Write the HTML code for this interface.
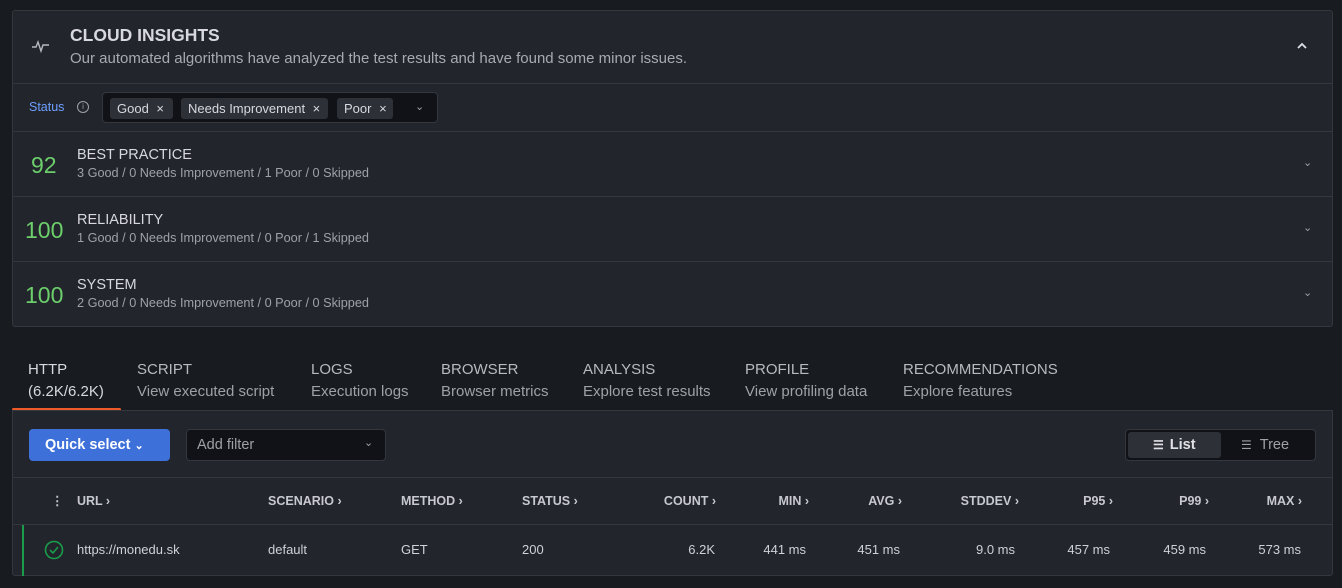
<!DOCTYPE html>
<html><head><style>
*{box-sizing:border-box;margin:0;padding:0}
body{width:1342px;height:588px;background:#181b1f;font-family:"Liberation Sans",sans-serif;color:#ccccdc;position:relative;overflow:hidden}
.a{position:absolute;white-space:nowrap}
.panel{position:absolute;left:12px;width:1321px;background:#22252b;border:1px solid #34373d;border-radius:3px}
.hl{position:absolute;left:0;right:0;height:1px;background:#34373d}
.chip{position:absolute;top:5px;height:21px;background:#2d3036;border-radius:3px;font-size:13px;line-height:21px;padding-left:7px;color:#d8d9e0}
.score{font-size:23px;color:#6ccf6c}
.ttl{font-size:14.5px;color:#d8d9e0}
.sub{font-size:12.7px;color:#9fa1a8}
.tab1{font-size:15px;color:#b8bac2}
.tab2{font-size:15px;color:#9fa1a8}
.th{font-size:12.5px;font-weight:bold;color:#c8c9d0}
.td{font-size:13px;color:#d0d1d8}
.chev{font-size:11px;color:#9fa1a8}
</style></head><body>
<div class="panel" style="top:10px;height:317px">
 <svg class="a" style="left:18px;top:26px" width="20" height="18" viewBox="0 0 20 18"><path d="M1 10h4l2-5 3 9 2-6h6" fill="none" stroke="#b8bac2" stroke-width="1.4"/></svg>
 <div class="a" style="left:57px;top:14px;font-size:17.5px;font-weight:bold;color:#d8d9e0">CLOUD INSIGHTS</div>
 <div class="a" style="left:57px;top:39px;font-size:15px;color:#a8aab2">Our automated algorithms have analyzed the test results and have found some minor issues.</div>
 <svg class="a" style="left:1283px;top:30px" width="12" height="10"><path d="M2 7l4-4 4 4" fill="none" stroke="#e0e0e6" stroke-width="1.8"/></svg>
 <div class="hl" style="top:72px"></div>
 <div class="a" style="left:16px;top:89px;font-size:12.5px;color:#6e9fff">Status</div>
 <div class="a" style="left:64px;top:90px;width:12px;height:12px;border:1px solid #9fa1a8;border-radius:50%;font-size:8px;text-align:center;line-height:10px;color:#9fa1a8">i</div>
 <div class="a" style="left:89px;top:81px;width:336px;height:31px;background:#111217;border:1px solid #34373d;border-radius:4px">
  <div class="chip" style="left:7px;width:63px">Good <span style="margin-left:4px">×</span></div>
  <div class="chip" style="left:78px;width:147px">Needs Improvement <span style="margin-left:4px">×</span></div>
  <div class="chip" style="left:234px;width:56px">Poor <span style="margin-left:4px">×</span></div>
  <div class="a chev" style="left:312px;top:7px">⌄</div>
 </div>
 <div class="hl" style="top:120px"></div>
 <div class="a score" style="left:18px;top:141px">92</div>
 <div class="a ttl" style="left:64px;top:136px">BEST PRACTICE</div>
 <div class="a sub" style="left:64px;top:155px">3 Good / 0 Needs Improvement / 1 Poor / 0 Skipped</div>
 <div class="a chev" style="left:1290px;top:145px">⌄</div>
 <div class="hl" style="top:185px"></div>
 <div class="a score" style="left:12px;top:206px">100</div>
 <div class="a ttl" style="left:64px;top:201px">RELIABILITY</div>
 <div class="a sub" style="left:64px;top:220px">1 Good / 0 Needs Improvement / 0 Poor / 1 Skipped</div>
 <div class="a chev" style="left:1290px;top:210px">⌄</div>
 <div class="hl" style="top:250px"></div>
 <div class="a score" style="left:12px;top:271px">100</div>
 <div class="a ttl" style="left:64px;top:266px">SYSTEM</div>
 <div class="a sub" style="left:64px;top:285px">2 Good / 0 Needs Improvement / 0 Poor / 0 Skipped</div>
 <div class="a chev" style="left:1290px;top:275px">⌄</div>
</div>

<div class="a tab1" style="left:28px;top:361px;color:#d8d9e0">HTTP</div><div class="a tab2" style="left:28px;top:383px;color:#d8d9e0">(6.2K/6.2K)</div>
<div class="a tab1" style="left:137px;top:361px">SCRIPT</div><div class="a tab2" style="left:137px;top:383px">View executed script</div>
<div class="a tab1" style="left:311px;top:361px">LOGS</div><div class="a tab2" style="left:311px;top:383px">Execution logs</div>
<div class="a tab1" style="left:441px;top:361px">BROWSER</div><div class="a tab2" style="left:441px;top:383px">Browser metrics</div>
<div class="a tab1" style="left:583px;top:361px">ANALYSIS</div><div class="a tab2" style="left:583px;top:383px">Explore test results</div>
<div class="a tab1" style="left:745px;top:361px">PROFILE</div><div class="a tab2" style="left:745px;top:383px">View profiling data</div>
<div class="a tab1" style="left:903px;top:361px">RECOMMENDATIONS</div><div class="a tab2" style="left:903px;top:383px">Explore features</div>
<div class="a" style="left:12px;top:408px;width:109px;height:3px;background:#f05a28;border-radius:2px"></div>

<div class="panel" style="top:410px;height:166px;border-radius:0 0 3px 3px">
 <div class="a" style="left:16px;top:18px;width:141px;height:32px;background:#3d71d9;border-radius:4px;color:#fff;font-size:14.5px;font-weight:bold;line-height:32px;padding-left:16px">Quick select <span style="font-size:11px">⌄</span></div>
 <div class="a" style="left:173px;top:18px;width:200px;height:32px;background:#111217;border:1px solid #34373d;border-radius:4px;color:#9fa1a8;font-size:14.5px;line-height:30px;padding-left:10px">Add filter<span class="a chev" style="left:177px;top:-2px">⌄</span></div>
 <div class="a" style="left:1112px;top:18px;width:191px;height:32px;background:#111217;border:1px solid #34373d;border-radius:4px">
  <div class="a" style="left:2px;top:2px;width:93px;height:26px;background:#2d3036;border-radius:3px;color:#e0e0e6;font-size:14.5px;font-weight:bold;line-height:26px;padding-left:25px"><span style="font-size:12px;margin-right:6px">☰</span>List</div>
  <div class="a" style="left:115px;top:2px;height:26px;color:#9fa1a8;font-size:14.5px;line-height:26px"><span style="font-size:12px;margin-right:8px">☰</span>Tree</div>
 </div>
 <div class="hl" style="top:66px"></div>
 <div class="a th" style="left:38px;top:82px">⋮</div>
 <div class="a th" style="left:64px;top:83px">URL ›</div>
 <div class="a th" style="left:255px;top:83px">SCENARIO ›</div>
 <div class="a th" style="left:388px;top:83px">METHOD ›</div>
 <div class="a th" style="left:509px;top:83px">STATUS ›</div>
 <div class="a th" style="right:616px;top:83px">COUNT ›</div>
 <div class="a th" style="right:523px;top:83px">MIN ›</div>
 <div class="a th" style="right:430px;top:83px">AVG ›</div>
 <div class="a th" style="right:313px;top:83px">STDDEV ›</div>
 <div class="a th" style="right:219px;top:83px">P95 ›</div>
 <div class="a th" style="right:123px;top:83px">P99 ›</div>
 <div class="a th" style="right:30px;top:83px">MAX ›</div>
 <div class="hl" style="top:113px"></div>
 <div class="a" style="left:9px;top:114px;width:2px;height:51px;background:#1a9c4a"></div>
 <svg class="a" style="left:31px;top:129px" width="20" height="20"><circle cx="10" cy="10" r="8.5" fill="none" stroke="#1a9c4a" stroke-width="1.6"/><path d="M6 10l3 3 5-6" fill="none" stroke="#1a9c4a" stroke-width="1.6"/></svg>
 <div class="a td" style="left:64px;top:131px">https://monedu.sk</div>
 <div class="a td" style="left:255px;top:131px">default</div>
 <div class="a td" style="left:388px;top:131px">GET</div>
 <div class="a td" style="left:509px;top:131px">200</div>
 <div class="a td" style="right:617px;top:131px">6.2K</div>
 <div class="a td" style="right:526px;top:131px">441 ms</div>
 <div class="a td" style="right:432px;top:131px">451 ms</div>
 <div class="a td" style="right:317px;top:131px">9.0 ms</div>
 <div class="a td" style="right:222px;top:131px">457 ms</div>
 <div class="a td" style="right:126px;top:131px">459 ms</div>
 <div class="a td" style="right:31px;top:131px">573 ms</div>
</div>
</body></html>
